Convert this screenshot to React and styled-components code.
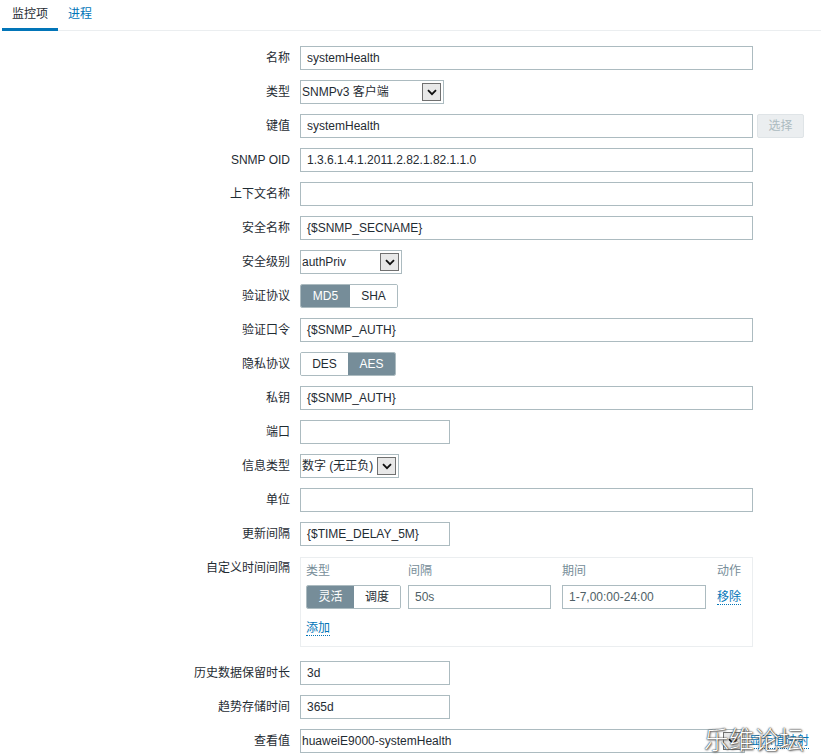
import React from "react";
import styled, { createGlobalStyle, css } from "styled-components";

const Global = createGlobalStyle`
  html, body { margin: 0; padding: 0; background: #fff; }
  body {
    font-family: "Liberation Sans", Arial, "Noto Sans CJK SC", sans-serif;
    font-size: 12px;
    color: #1f2c33;
  }
  * { box-sizing: border-box; }
`;

const Page = styled.div`
  position: relative;
  width: 821px;
  height: 756px;
  overflow: hidden;
  padding-left: 2px;
`;

const Tabs = styled.div`
  display: flex;
  height: 31px;
  border-bottom: 1px solid #ebeef0;
`;

const Tab = styled.div`
  padding: 0 10px;
  height: 31px;
  line-height: 30px;
  font-size: 12px;
  color: ${(p) => (p.$active ? "#1f2c33" : "#0275b8")};
  border-bottom: 3px solid ${(p) => (p.$active ? "#0275b8" : "transparent")};
  margin-bottom: -1px;
  & > span { position: relative; top: -1px; }
`;

const Form = styled.div`
  display: grid;
  grid-template-columns: 288px 1fr;
  column-gap: 10px;
  row-gap: 10px;
  padding-top: 15px;
`;

const Label = styled.div`
  text-align: right;
  line-height: 24px;
  height: 24px;
  white-space: nowrap;
`;

const Control = styled.div`
  display: flex;
  align-items: ${(p) => (p.$top ? "flex-start" : "center")};
  gap: 4px;
  min-height: 24px;
`;

const Input = styled.div`
  width: ${(p) => p.$w}px;
  height: 24px;
  border: 1px solid #acbbc0;
  background: #fff;
  padding: 0 6px;
  line-height: 22px;
  white-space: nowrap;
  overflow: hidden;
  color: ${(p) => (p.$muted ? "#4f5f67" : "#1f2c33")};
`;

const SelectBox = styled.div`
  width: ${(p) => p.$w}px;
  height: 24px;
  border: 1px solid #acbbc0;
  background: #fff;
  display: flex;
  align-items: center;
  justify-content: space-between;
  padding: 0 2px 0 1px;
  white-space: nowrap;
  overflow: hidden;
`;

const SelectText = styled.span`
  line-height: 22px;
`;

const ArrowBox = styled.span`
  width: 19px;
  height: 18px;
  border: 1px solid #707070;
  background: #e8e8e8;
  display: flex;
  align-items: center;
  justify-content: center;
  flex: none;
`;

const Chevron = () => (
  <svg width="10" height="7" viewBox="0 0 10 7">
    <path d="M1 1.2 L5 5.2 L9 1.2" fill="none" stroke="#111" strokeWidth="1.8" />
  </svg>
);

const Select = ({ w, children }) => (
  <SelectBox $w={w}>
    <SelectText>{children}</SelectText>
    <ArrowBox>
      <Chevron />
    </ArrowBox>
  </SelectBox>
);

const ButtonDisabled = styled.div`
  width: 47px;
  height: 24px;
  border: 1px solid #dfe4e7;
  background: #ebeef0;
  color: #acbbc0;
  border-radius: 2px;
  text-align: center;
  line-height: 22px;
`;

const Seg = styled.div`
  display: flex;
  height: 24px;
  width: max-content;
  border: 1px solid #acbbc0;
  border-radius: 2px;
  overflow: hidden;
`;

const SegItem = styled.div`
  width: ${(p) => p.$w}px;
  text-align: center;
  line-height: 22px;
  ${(p) =>
    p.$on
      ? css`
          background: #768d99;
          color: #fff;
        `
      : css`
          background: #fff;
          color: #1f2c33;
        `}
`;

const Box = styled.div`
  width: 453px;
  height: 90px;
  border: 1px solid #ebeef0;
  padding: 5px 5px 0 5px;
  margin-top: 1px;
  margin-bottom: 4px;
`;

const IntervalGrid = styled.div`
  display: grid;
  grid-template-columns: 102px 154px 155px 1fr;
  row-gap: 6px;
  align-items: center;
`;

const Head = styled.div`
  color: #768d99;
  line-height: 16px;
`;

const Link = styled.span`
  color: #0275b8;
  border-bottom: 1px dotted #0275b8;
  line-height: 14px;
  cursor: pointer;
  white-space: nowrap;
`;

const AddRow = styled.div`
  margin-top: 12px;
  height: 16px;
  line-height: 14px;
`;

const Watermark = styled.div`
  position: absolute;
  left: 704px;
  top: 720px;
  font-size: 25px;
  color: #fff;
  font-family: "Noto Sans CJK SC", sans-serif;
  font-weight: 300;
  text-shadow: 0 0 1px #222, 0 0 2px #444, 1px 1px 2px #666;
  pointer-events: none;
`;

const Row = ({ label, children, top }) => (
  <>
    <Label>{label}</Label>
    <Control $top={top}>{children}</Control>
  </>
);

export default function App() {
  return (
    <Page>
      <Global />
      <Tabs>
        <Tab $active>
          <span>监控项</span>
        </Tab>
        <Tab>
          <span>进程</span>
        </Tab>
      </Tabs>
      <Form>
        <Row label="名称">
          <Input $w={453}>systemHealth</Input>
        </Row>
        <Row label="类型">
          <Select w={144}>SNMPv3 客户端</Select>
        </Row>
        <Row label="键值">
          <Input $w={453}>systemHealth</Input>
          <ButtonDisabled>选择</ButtonDisabled>
        </Row>
        <Row label="SNMP OID">
          <Input $w={453}>1.3.6.1.4.1.2011.2.82.1.82.1.1.0</Input>
        </Row>
        <Row label="上下文名称">
          <Input $w={453}></Input>
        </Row>
        <Row label="安全名称">
          <Input $w={453}>{"{$SNMP_SECNAME}"}</Input>
        </Row>
        <Row label="安全级别">
          <Select w={102}>authPriv</Select>
        </Row>
        <Row label="验证协议">
          <Seg>
            <SegItem $w={49} $on>
              MD5
            </SegItem>
            <SegItem $w={47}>SHA</SegItem>
          </Seg>
        </Row>
        <Row label="验证口令">
          <Input $w={453}>{"{$SNMP_AUTH}"}</Input>
        </Row>
        <Row label="隐私协议">
          <Seg>
            <SegItem $w={47}>DES</SegItem>
            <SegItem $w={47} $on>
              AES
            </SegItem>
          </Seg>
        </Row>
        <Row label="私钥">
          <Input $w={453}>{"{$SNMP_AUTH}"}</Input>
        </Row>
        <Row label="端口">
          <Input $w={150}></Input>
        </Row>
        <Row label="信息类型">
          <Select w={99}>数字 (无正负)</Select>
        </Row>
        <Row label="单位">
          <Input $w={453}></Input>
        </Row>
        <Row label="更新间隔">
          <Input $w={150}>{"{$TIME_DELAY_5M}"}</Input>
        </Row>
        <Row label="自定义时间间隔" top>
          <Box>
            <IntervalGrid>
              <Head>类型</Head>
              <Head>间隔</Head>
              <Head>期间</Head>
              <Head>动作</Head>
              <Seg>
                <SegItem $w={47} $on>
                  灵活
                </SegItem>
                <SegItem $w={46}>调度</SegItem>
              </Seg>
              <Input $w={143} $muted>50s</Input>
              <Input $w={144} $muted>1-7,00:00-24:00</Input>
              <div>
                <Link>移除</Link>
              </div>
            </IntervalGrid>
            <AddRow>
              <Link>添加</Link>
            </AddRow>
          </Box>
        </Row>
        <Row label="历史数据保留时长">
          <Input $w={150}>3d</Input>
        </Row>
        <Row label="趋势存储时间">
          <Input $w={150}>365d</Input>
        </Row>
        <Row label="查看值">
          <Select w={445}>huaweiE9000-systemHealth</Select>
          <Link>显示值映射</Link>
        </Row>
      </Form>
      <Watermark>乐维论坛</Watermark>
    </Page>
  );
}
